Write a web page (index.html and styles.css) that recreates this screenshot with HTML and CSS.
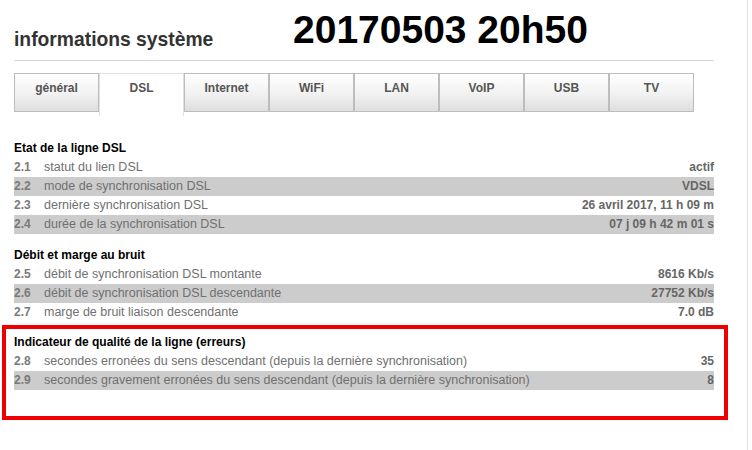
FILE: index.html
```html
<!DOCTYPE html>
<html>

<head>
    <title>informations système</title>
    <link rel="stylesheet" href="styles.css">
</head>

<body>
    <div class="page">
        <div class="content">
            <div class="header">
                <h1 class="title">informations système</h1>
                <div class="stamp">20170503 20h50</div>
            </div>

            <div class="tabs">
                <div class="tab">général</div>
                <div class="tab active">DSL</div>
                <div class="tab">Internet</div>
                <div class="tab">WiFi</div>
                <div class="tab">LAN</div>
                <div class="tab">VoIP</div>
                <div class="tab">USB</div>
                <div class="tab">TV</div>
            </div>

            <div class="section first">
                <h2>Etat de la ligne DSL</h2>
                <div class="row"><span class="num">2.1</span><span class="label">statut du lien DSL</span><span class="value">actif</span></div>
                <div class="row alt"><span class="num">2.2</span><span class="label">mode de synchronisation DSL</span><span class="value">VDSL</span></div>
                <div class="row"><span class="num">2.3</span><span class="label">dernière synchronisation DSL</span><span class="value">26 avril 2017, 11 h 09 m</span></div>
                <div class="row alt"><span class="num">2.4</span><span class="label">durée de la synchronisation DSL</span><span class="value">07 j 09 h 42 m 01 s</span></div>
            </div>

            <div class="section">
                <h2>Débit et marge au bruit</h2>
                <div class="row"><span class="num">2.5</span><span class="label">débit de synchronisation DSL montante</span><span class="value">8616 Kb/s</span></div>
                <div class="row alt"><span class="num">2.6</span><span class="label">débit de synchronisation DSL descendante</span><span class="value">27752 Kb/s</span></div>
                <div class="row"><span class="num">2.7</span><span class="label">marge de bruit liaison descendante</span><span class="value">7.0 dB</span></div>
            </div>

            <div class="section marked">
                <h2>Indicateur de qualité de la ligne (erreurs)</h2>
                <div class="row"><span class="num">2.8</span><span class="label">secondes erronées du sens descendant (depuis la dernière synchronisation)</span><span class="value">35</span></div>
                <div class="row alt"><span class="num">2.9</span><span class="label">secondes gravement erronées du sens descendant (depuis la dernière synchronisation)</span><span class="value">8</span></div>
            </div>
        </div>
    </div>
</body>

</html>
```

FILE: styles.css
```css
body {
    margin: 0;
    background-color: white;
    font-family: "Liberation Sans", Arial, sans-serif;
}

.page {
    width: 747px;
    height: 450px;
    border-right: 1px solid #e4e4e4;
    overflow: hidden;
}

.content {
    width: 700px;
    padding-left: 14px;
}

/* page title + timestamp */
.header {
    display: flex;
    height: 60px;
    border-bottom: 1px solid #d6d6d6;
}

.title {
    width: 279px;
    margin: 30px 0 0 0;
    font-size: 19.3px;
    line-height: 20px;
    color: #333;
}

.stamp {
    margin-top: 10px;
    font-size: 39px;
    line-height: 39px;
    font-weight: bold;
    color: #000;
}

/* tab bar */
.tabs {
    display: flex;
    align-items: flex-start;
    margin-top: 12px;
}

.tab {
    box-sizing: border-box;
    width: 85px;
    height: 39px;
    padding-top: 7px;
    border: 1px solid #bdbdbd;
    background: linear-gradient(#ffffff, #f1f1f1 55%, #dedede);
    font-size: 12px;
    line-height: 14px;
    font-weight: bold;
    color: #555;
    text-align: center;
}

.tab.active {
    height: 43px;
    background: white;
    border-color: #e0e0e0;
    border-bottom: none;
}

/* info sections */
.section {
    margin-top: 12px;
}

.section.first {
    margin-top: 23px;
}

.section h2 {
    margin: 0;
    font-size: 12px;
    line-height: 19px;
    color: #000;
}

.row {
    display: flex;
    height: 19px;
    line-height: 19px;
    font-size: 12.5px;
    color: #707070;
}

.row.alt {
    background-color: #cccccc;
}

.num {
    width: 30px;
    font-size: 12px;
    font-weight: bold;
    color: #7a7a7a;
}

.value {
    margin-left: auto;
    font-size: 12px;
    font-weight: bold;
    color: #666;
}

/* highlighted block */
.section.marked {
    margin: 3px -14px 0 -12px;
    padding: 4px 10px 26px 8px;
    border: 4px solid #ee0000;
}
```
